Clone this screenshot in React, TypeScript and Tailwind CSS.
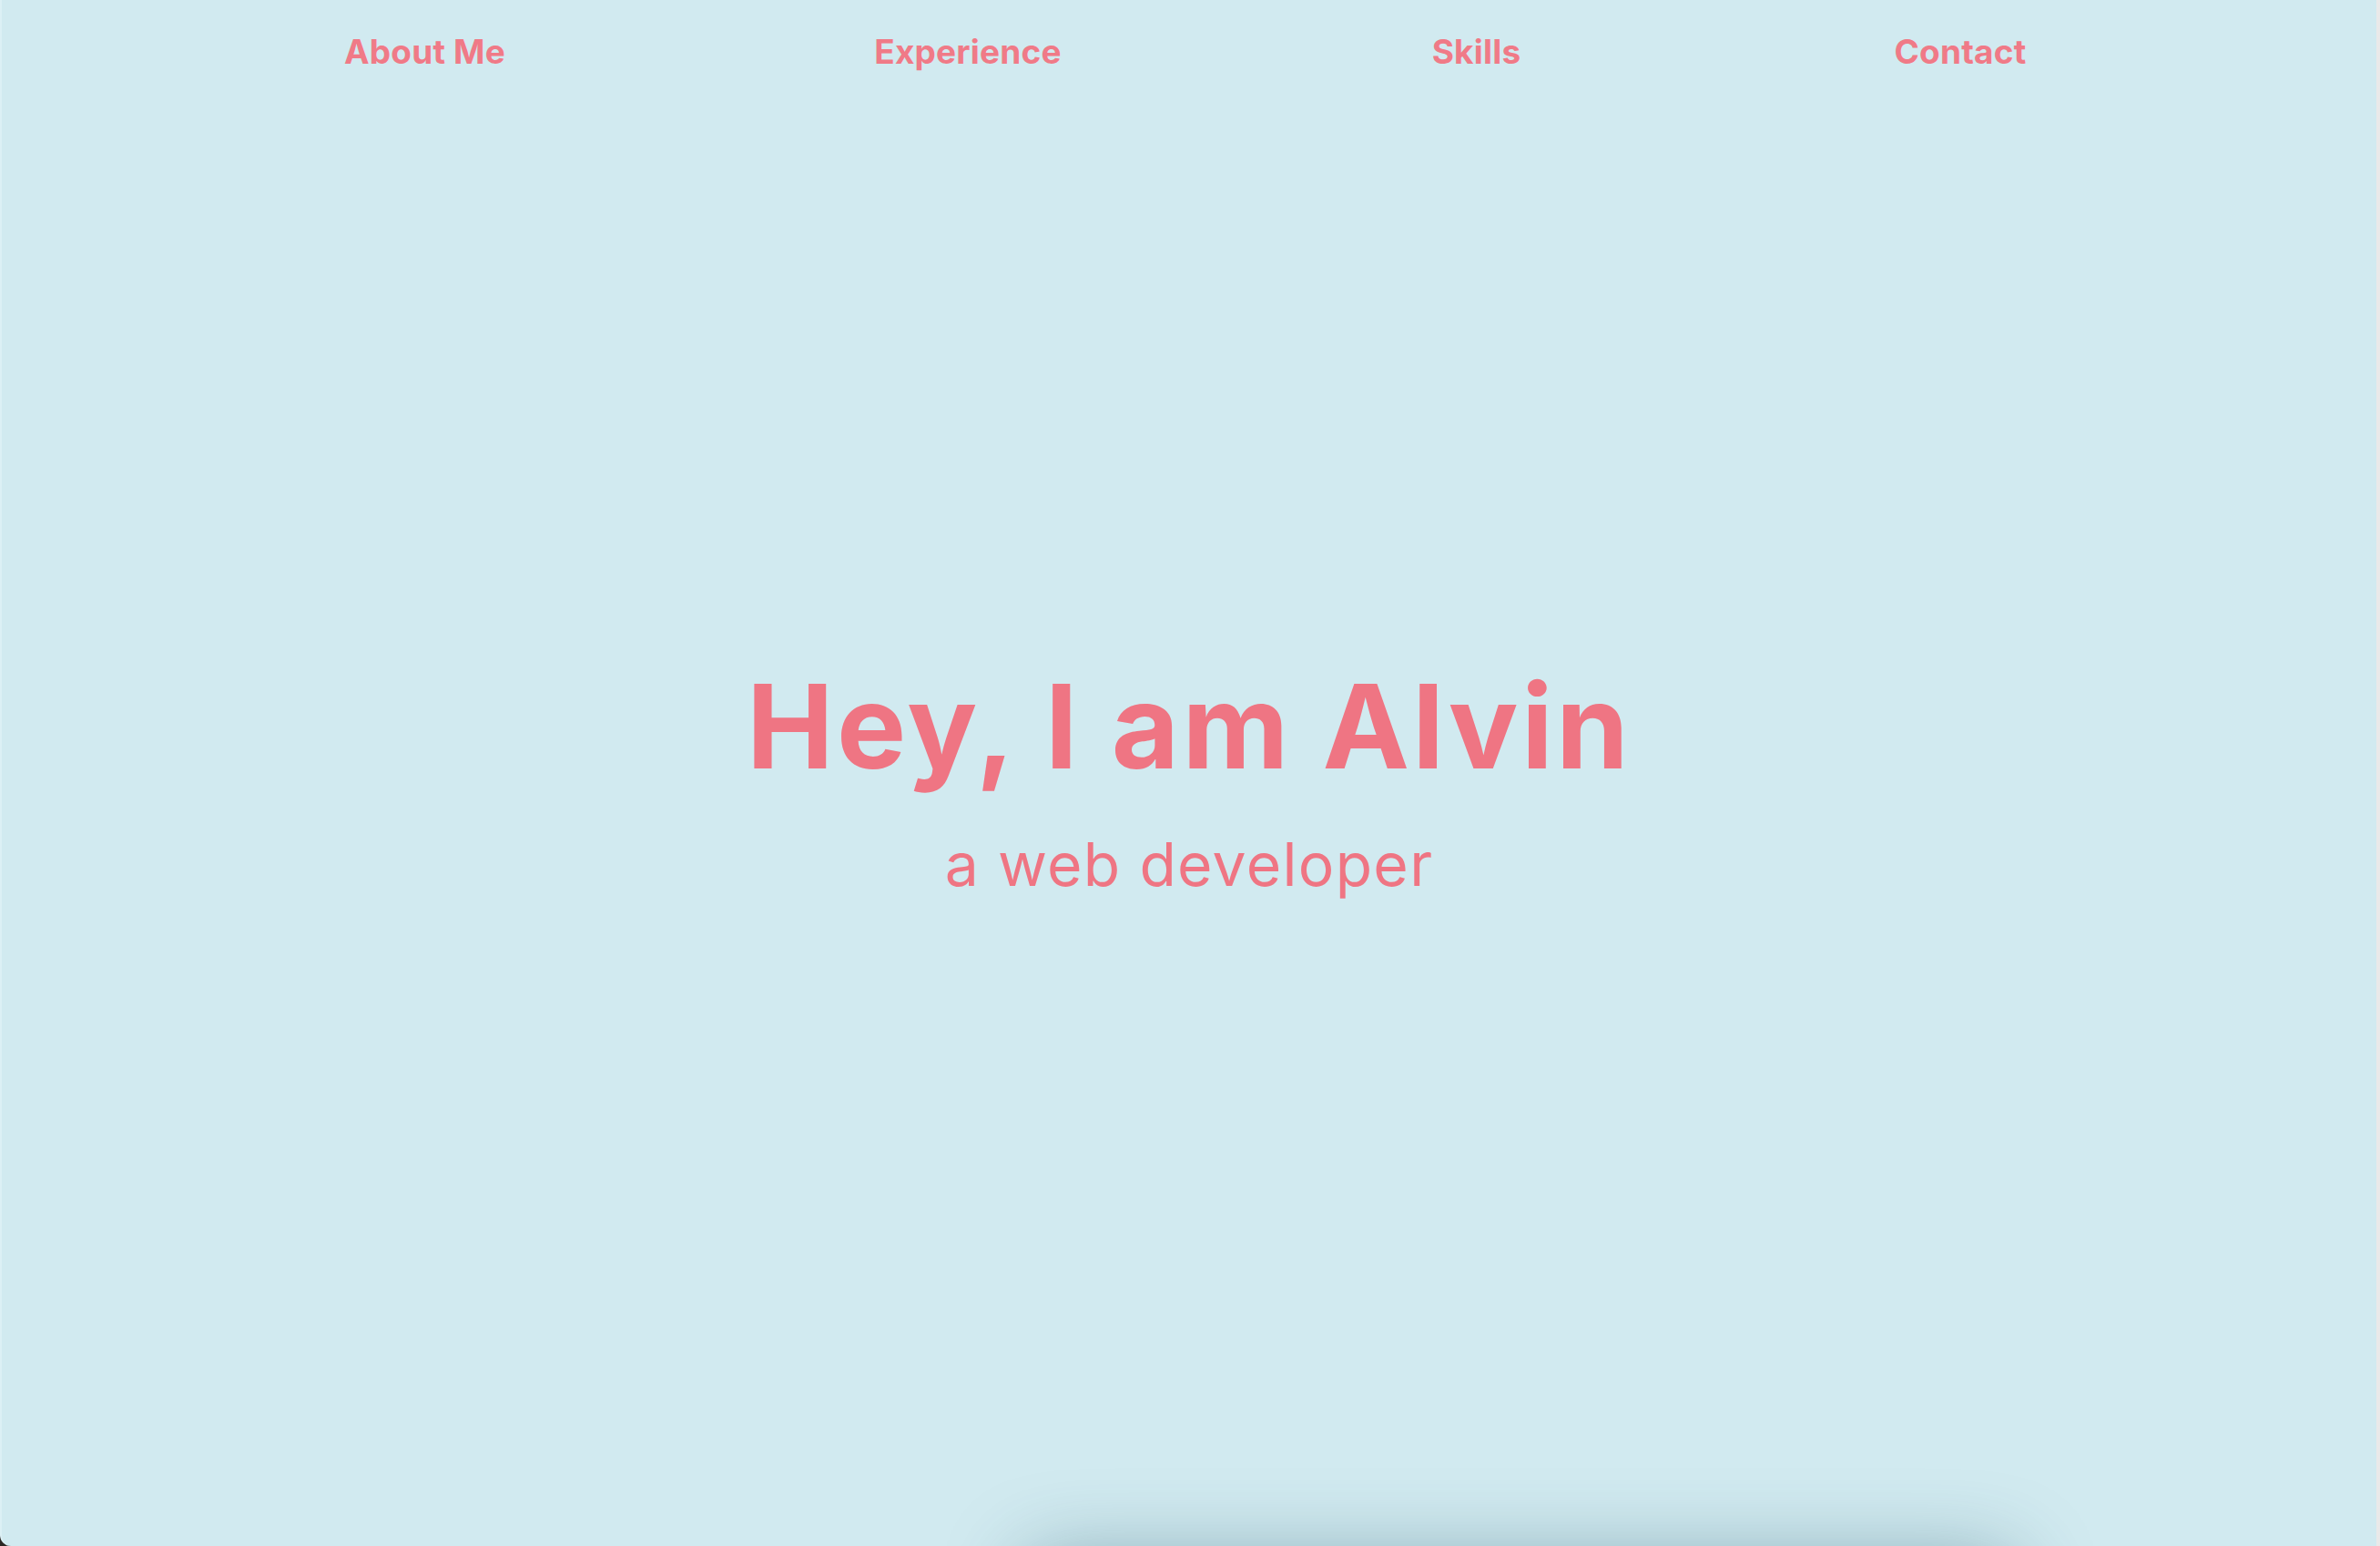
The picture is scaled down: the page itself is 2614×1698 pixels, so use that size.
const navItems = ['About Me', 'Experience', 'Skills', 'Contact'];

export default function App() {
  return (
    <div className="flex h-[1698px] w-full overflow-hidden bg-[#2b2724]">
      <div
        className="flex-1 overflow-hidden rounded-bl-[12px] border-l-2 border-[#dcf0f5] bg-[#d1eaf0] text-[#ef7583]"
        style={{ fontFamily: 'Inter, "Open Sans", sans-serif' }}
      >
        <section className="relative flex h-[1698px] flex-col">
          <nav className="grid h-[114px] grid-cols-[581px_612px_505px_558px] items-center pl-[174px]">
            {navItems.map((item) => (
              <a key={item} href="#" className="text-center text-[37px] font-bold tracking-[0.2px] text-[#f07a87]">
                {item}
              </a>
            ))}
          </nav>

          <div className="flex flex-1 flex-col items-center justify-center pb-[106px]">
            <h1 className="text-[128px] font-bold leading-[1.15] tracking-[3.4px]">Hey, I am Alvin</h1>
            <p className="mt-[44px] text-[66px] font-normal leading-none tracking-[1.3px]">a web developer</p>
          </div>
        </section>

        <section className="pt-[20px]">
          <div className="ml-[1125px] h-[700px] w-[1085px] rounded-[16px] bg-[#d1eaf0] shadow-[0_-6px_90px_rgba(20,70,90,0.4)]" />
        </section>
      </div>
      <div className="w-[4px] bg-[#e9e9e9]" />
    </div>
  );
}
